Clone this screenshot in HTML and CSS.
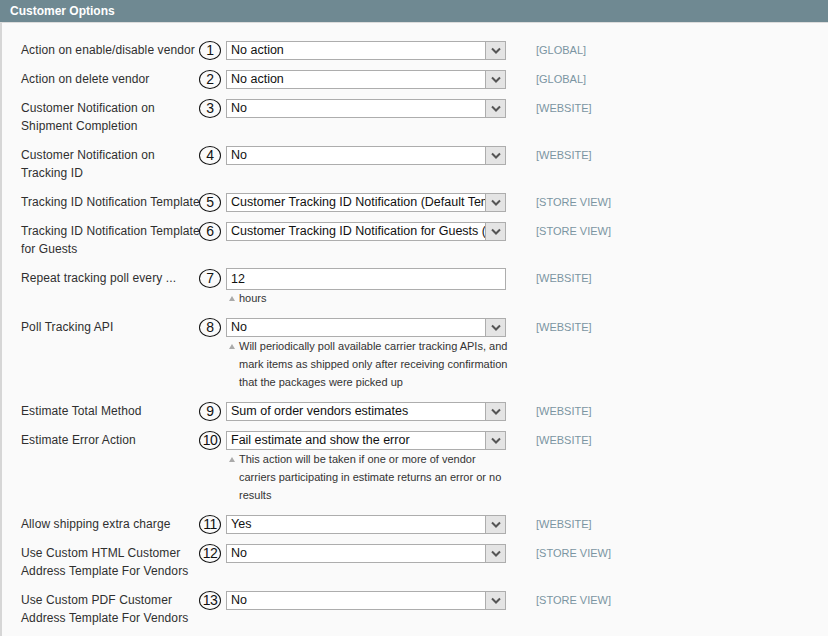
FILE: index.html
```html
<!DOCTYPE html>
<html lang="en">
<head>
    <meta charset="UTF-8">
    <title>Customer Options</title>
    <link rel="stylesheet" href="styles.css">
</head>
<body>
    <div class="section">
        <div class="section-head">Customer Options</div>

        <div class="fieldset">
            <div class="row">
                <div class="label">Action on enable/disable vendor</div>
                <div class="mark">1</div>
                <div class="value">
                    <div class="select"><span class="select-text">No action</span><span class="select-btn"><svg width="10" height="7" viewBox="0 0 10 7"><path d="M1 1.5 L5 5.5 L9 1.5" fill="none" stroke="#555" stroke-width="2"/></svg></span></div>
                </div>
                <div class="scope">[GLOBAL]</div>
            </div>

            <div class="row">
                <div class="label">Action on delete vendor</div>
                <div class="mark">2</div>
                <div class="value">
                    <div class="select"><span class="select-text">No action</span><span class="select-btn"><svg width="10" height="7" viewBox="0 0 10 7"><path d="M1 1.5 L5 5.5 L9 1.5" fill="none" stroke="#555" stroke-width="2"/></svg></span></div>
                </div>
                <div class="scope">[GLOBAL]</div>
            </div>

            <div class="row">
                <div class="label">Customer Notification on Shipment Completion</div>
                <div class="mark">3</div>
                <div class="value">
                    <div class="select"><span class="select-text">No</span><span class="select-btn"><svg width="10" height="7" viewBox="0 0 10 7"><path d="M1 1.5 L5 5.5 L9 1.5" fill="none" stroke="#555" stroke-width="2"/></svg></span></div>
                </div>
                <div class="scope">[WEBSITE]</div>
            </div>

            <div class="row">
                <div class="label">Customer Notification on Tracking ID</div>
                <div class="mark">4</div>
                <div class="value">
                    <div class="select"><span class="select-text">No</span><span class="select-btn"><svg width="10" height="7" viewBox="0 0 10 7"><path d="M1 1.5 L5 5.5 L9 1.5" fill="none" stroke="#555" stroke-width="2"/></svg></span></div>
                </div>
                <div class="scope">[WEBSITE]</div>
            </div>

            <div class="row">
                <div class="label nowrap">Tracking ID Notification Template</div>
                <div class="mark">5</div>
                <div class="value">
                    <div class="select"><span class="select-text">Customer Tracking ID Notification (Default Template from Locale)</span><span class="select-btn"><svg width="10" height="7" viewBox="0 0 10 7"><path d="M1 1.5 L5 5.5 L9 1.5" fill="none" stroke="#555" stroke-width="2"/></svg></span></div>
                </div>
                <div class="scope">[STORE VIEW]</div>
            </div>

            <div class="row">
                <div class="label nowrap">Tracking ID Notification Template<br>for Guests</div>
                <div class="mark">6</div>
                <div class="value">
                    <div class="select"><span class="select-text">Customer Tracking ID Notification for Guests (Default Template from Locale)</span><span class="select-btn"><svg width="10" height="7" viewBox="0 0 10 7"><path d="M1 1.5 L5 5.5 L9 1.5" fill="none" stroke="#555" stroke-width="2"/></svg></span></div>
                </div>
                <div class="scope">[STORE VIEW]</div>
            </div>

            <div class="row">
                <div class="label">Repeat tracking poll every ...</div>
                <div class="mark">7</div>
                <div class="value">
                    <div class="input">12</div>
                    <div class="note">hours</div>
                </div>
                <div class="scope">[WEBSITE]</div>
            </div>

            <div class="row">
                <div class="label">Poll Tracking API</div>
                <div class="mark">8</div>
                <div class="value">
                    <div class="select"><span class="select-text">No</span><span class="select-btn"><svg width="10" height="7" viewBox="0 0 10 7"><path d="M1 1.5 L5 5.5 L9 1.5" fill="none" stroke="#555" stroke-width="2"/></svg></span></div>
                    <div class="note">Will periodically poll available carrier tracking APIs, and mark items as shipped only after receiving confirmation that the packages were picked up</div>
                </div>
                <div class="scope">[WEBSITE]</div>
            </div>

            <div class="row">
                <div class="label">Estimate Total Method</div>
                <div class="mark">9</div>
                <div class="value">
                    <div class="select"><span class="select-text">Sum of order vendors estimates</span><span class="select-btn"><svg width="10" height="7" viewBox="0 0 10 7"><path d="M1 1.5 L5 5.5 L9 1.5" fill="none" stroke="#555" stroke-width="2"/></svg></span></div>
                </div>
                <div class="scope">[WEBSITE]</div>
            </div>

            <div class="row">
                <div class="label">Estimate Error Action</div>
                <div class="mark">10</div>
                <div class="value">
                    <div class="select"><span class="select-text">Fail estimate and show the error</span><span class="select-btn"><svg width="10" height="7" viewBox="0 0 10 7"><path d="M1 1.5 L5 5.5 L9 1.5" fill="none" stroke="#555" stroke-width="2"/></svg></span></div>
                    <div class="note">This action will be taken if one or more of vendor carriers participating in estimate returns an error or no results</div>
                </div>
                <div class="scope">[WEBSITE]</div>
            </div>

            <div class="row">
                <div class="label">Allow shipping extra charge</div>
                <div class="mark">11</div>
                <div class="value">
                    <div class="select"><span class="select-text">Yes</span><span class="select-btn"><svg width="10" height="7" viewBox="0 0 10 7"><path d="M1 1.5 L5 5.5 L9 1.5" fill="none" stroke="#555" stroke-width="2"/></svg></span></div>
                </div>
                <div class="scope">[WEBSITE]</div>
            </div>

            <div class="row">
                <div class="label">Use Custom HTML Customer Address Template For Vendors</div>
                <div class="mark">12</div>
                <div class="value">
                    <div class="select"><span class="select-text">No</span><span class="select-btn"><svg width="10" height="7" viewBox="0 0 10 7"><path d="M1 1.5 L5 5.5 L9 1.5" fill="none" stroke="#555" stroke-width="2"/></svg></span></div>
                </div>
                <div class="scope">[STORE VIEW]</div>
            </div>

            <div class="row">
                <div class="label">Use Custom PDF Customer Address Template For Vendors</div>
                <div class="mark">13</div>
                <div class="value">
                    <div class="select"><span class="select-text">No</span><span class="select-btn"><svg width="10" height="7" viewBox="0 0 10 7"><path d="M1 1.5 L5 5.5 L9 1.5" fill="none" stroke="#555" stroke-width="2"/></svg></span></div>
                </div>
                <div class="scope">[STORE VIEW]</div>
            </div>
        </div>
    </div>
</body>
</html>
```

FILE: styles.css
```css
:root {
    --head-color: #6f8992;
    --page-bg: #fafafa;
    --text-color: #2f2f2f;
    --border-color: #d6d6d6;
    --field-border: #adadad;
    --scope-color: #7b95a2;
}

* {
    box-sizing: border-box;
    margin: 0;
    padding: 0;
}

body {
    font-family: "Liberation Sans", Arial, sans-serif;
    font-size: 12px;
    line-height: 18px;
    color: var(--text-color);
    background-color: var(--page-bg);
}

.section {
    min-height: 636px;
    border-left: 2px solid var(--border-color);
}

.section-head {
    height: 23px;
    margin-left: -2px;
    padding: 2px 10px 0;
    background-color: var(--head-color);
    border-bottom: 1px solid #dcdcdc;
    color: #fff;
    font-weight: bold;
    line-height: 18px;
}

.fieldset {
    padding: 13px 0 0 19px;
}

.row {
    display: grid;
    grid-template-columns: 178px 27px 280px auto;
    align-items: start;
    padding: 5px 0 6px;
}

.label {
    width: 178px;
    padding-right: 2px;
    letter-spacing: 0.1px;
}

.label.nowrap {
    white-space: nowrap;
    padding-right: 0;
}

.mark {
    position: relative;
    z-index: 1;
    width: 22px;
    height: 19px;
    margin-bottom: -1px;
    border: 1px solid #111;
    border-radius: 50%;
    color: #111;
    font-size: 14px;
    line-height: 17px;
    text-align: center;
    letter-spacing: -0.5px;
}

.value {
    width: 280px;
}

.select {
    display: flex;
    height: 19px;
    margin-bottom: -1px;
    background-color: #fff;
    border: 1px solid var(--field-border);
    overflow: hidden;
}

.select-text {
    flex: 1;
    padding-left: 4px;
    white-space: nowrap;
    overflow: hidden;
    line-height: 17px;
    font-size: 12.5px;
    color: #111;
}

.select-btn {
    display: flex;
    align-items: center;
    justify-content: center;
    width: 20px;
    background-color: #e4e4e4;
    border-left: 1px solid var(--field-border);
}

.input {
    height: 22px;
    margin-top: -1px;
    margin-bottom: -2px;
    padding-left: 4px;
    background-color: #fff;
    border: 1px solid var(--field-border);
    line-height: 20px;
    font-size: 12.5px;
    color: #111;
}

.note {
    position: relative;
    margin-top: 1px;
    margin-right: -6px;
    padding-left: 13px;
    font-size: 11px;
    line-height: 18px;
    color: #333;
}

.note::before {
    content: "";
    position: absolute;
    left: 3px;
    top: 7px;
    border-left: 3.5px solid transparent;
    border-right: 3.5px solid transparent;
    border-bottom: 5px solid #aaa;
}

.scope {
    padding-left: 30px;
    font-size: 11px;
    color: var(--scope-color);
}
```
